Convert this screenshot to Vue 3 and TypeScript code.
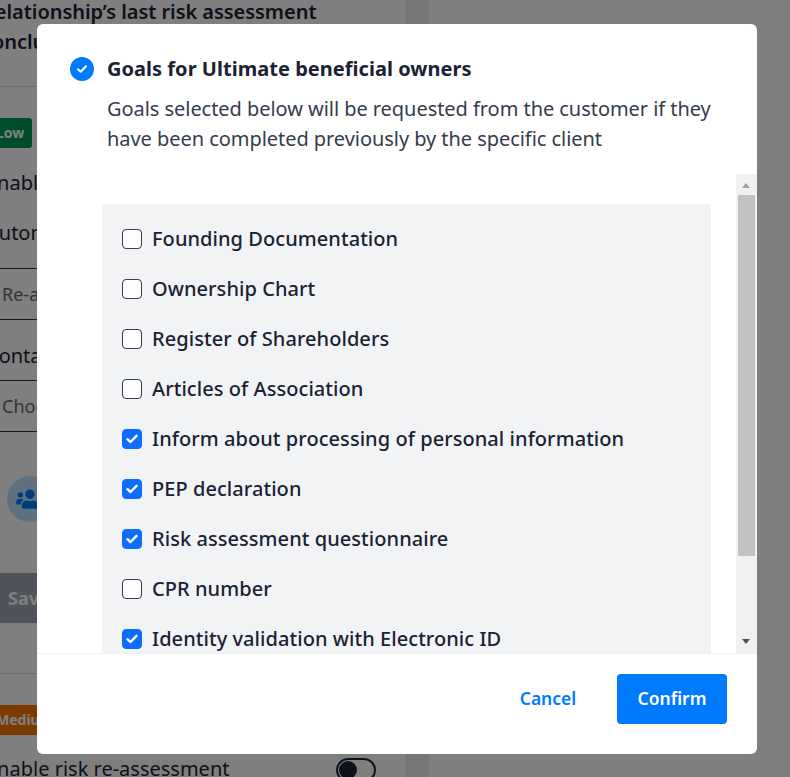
<script setup lang="ts">
interface Goal { label: string; checked: boolean }
const goals: Goal[] = [
  { label: 'Founding Documentation', checked: false },
  { label: 'Ownership Chart', checked: false },
  { label: 'Register of Shareholders', checked: false },
  { label: 'Articles of Association', checked: false },
  { label: 'Inform about processing of personal information', checked: true },
  { label: 'PEP declaration', checked: true },
  { label: 'Risk assessment questionnaire', checked: true },
  { label: 'CPR number', checked: false },
  { label: 'Identity validation with Electronic ID', checked: true },
  { label: 'Proof of address', checked: false },
]
</script>

<template>
  <div class="page">
    <div class="bg">
      <div class="panel">
        <div class="heading">Relationship’s last risk assessment<br />conclusion</div>
        <div class="rule"></div>
        <span class="tag low">Low</span>
        <div class="line l1">Enable</div>
        <div class="line l2">Automatic</div>
        <div class="field f1">Re-assess</div>
        <div class="line l3">Contact</div>
        <div class="field f2">Choose</div>
        <div class="avatar">
          <svg width="28" height="22" viewBox="0 0 640 512"><path fill="#007bff" d="M96 224a64 64 0 1 0 0-128 64 64 0 0 0 0 128zm448 0a64 64 0 1 0 0-128 64 64 0 0 0 0 128zm32 32h-64c-17.600 0-33.500 7.100-45.100 18.600 40.300 22.100 68.900 62 75.100 109.400h66c17.700 0 32-14.300 32-32v-32c0-35.300-28.700-64-64-64zm-256 0a112 112 0 1 0 0-224 112 112 0 0 0 0 224zm76.800 32h-8.300c-20.800 10-43.900 16-68.500 16s-47.600-6-68.500-16h-8.300C179.600 288 128 339.600 128 403.200V432c0 26.500 21.500 48 48 48h288c26.500 0 48-21.500 48-48v-28.800c0-63.600-51.600-115.200-115.200-115.200zm-223.700-13.400C161.500 263.100 145.600 256 128 256H64c-35.300 0-64 28.700-64 64v32c0 17.700 14.300 32 32 32h65.900c6.300-47.400 34.900-87.300 75.200-109.400z"/></svg>
        </div>
        <div class="save">Save</div>
        <div class="rule r2"></div>
        <span class="tag medium">Medium</span>
        <div class="enable">
          <span>Enable risk re-assessment</span>
          <span class="toggle"><i></i></span>
        </div>
      </div>
    </div>
    <div class="backdrop"></div>
    <section class="modal">
      <header class="head">
        <span class="badge">
          <svg width="12" height="10" viewBox="0 0 12 10"><path d="M2 5.200 4.700 7.800 10 2.200" fill="none" stroke="#fff" stroke-width="2" stroke-linecap="round" stroke-linejoin="round"/></svg>
        </span>
        <div class="titles">
          <h2>Goals for Ultimate beneficial owners</h2>
          <p>Goals selected below will be requested from the customer if they have been completed previously by the specific client</p>
        </div>
      </header>
      <div class="scroller">
        <ul class="list">
          <li v-for="g in goals" :key="g.label" class="item">
            <span class="box" :class="{ on: g.checked }">
              <svg v-if="g.checked" width="12" height="10" viewBox="0 0 12 10"><path d="M1.500 5.200 4.500 8 10.500 1.800" fill="none" stroke="#fff" stroke-width="2.400" stroke-linecap="round" stroke-linejoin="round"/></svg>
            </span>
            <span class="label">{{ g.label }}</span>
          </li>
        </ul>
        <div class="scrollbar">
          <span class="arrow up"></span>
          <span class="thumb"></span>
          <span class="arrow down"></span>
        </div>
      </div>
      <footer class="foot">
        <button class="cancel">Cancel</button>
        <button class="confirm">Confirm</button>
      </footer>
    </section>
  </div>
</template>

<style>
html, body { margin: 0; overflow: hidden; }
</style>

<style scoped>
.page {
  position: relative;
  width: 790px;
  height: 777px;
  overflow: hidden;
  font-family: "Noto Sans", sans-serif;
  color: #1a2233;
}
.bg {
  height: 100%;
  display: flex;
  background: #fff;
}
.panel {
  position: relative;
  width: 406px;
  margin-right: 22px;
  border-right: 1px solid #ddd;
  box-shadow: 22px 0 0 #ececec;
  font-size: 20px;
  color: #1a2233;
}
.heading { margin: -3px 0 0 -18px; font-weight: 600; line-height: 30px; letter-spacing: -.05px; white-space: nowrap; }
.rule { height: 1px; background: #dcdfe4; margin-top: 29px; }
.r2 { margin-top: 50px; }
.tag {
  display: block;
  width: max-content;
  margin: 31px 0 0 -12px;
  padding: 0 8px;
  border-radius: 3px;
  color: #fff;
  font-size: 14px;
  font-weight: 700;
  line-height: 30px;
}
.low { background: #009b58; }
.medium { background: #f47500; margin-top: 31px; }
.line { margin-left: -14px; line-height: 26px; white-space: nowrap; }
.l1 { margin-top: 22px; }
.l2 { margin-top: 24px; }
.l3 { margin-top: 23px; }
.field {
  margin-left: -1px;
  height: 50px;
  line-height: 50px;
  border-top: 1px solid #333;
  border-bottom: 1px solid #333;
  padding-left: 3px;
  font-size: 18px;
  color: #666;
}
.f1 { margin-top: 22px; }
.f2 { margin-top: 11px; }
.avatar {
  width: 46px;
  height: 46px;
  border-radius: 50%;
  margin: 44px 0 0 7px;
  background: #bee0ff;
  display: flex;
  align-items: center;
  justify-content: center;
}
.save {
  width: 60px;
  height: 50px;
  margin-top: 51px;
  padding-left: 8px;
  line-height: 50px;
  background: #a0a7b3;
  color: #fff;
  font-size: 18px;
  font-weight: 700;
}
.enable {
  display: flex;
  justify-content: space-between;
  width: 390px;
  margin: 21px 0 0 -14px;
  line-height: 26px;
  white-space: nowrap;
}
.toggle {
  box-sizing: border-box;
  width: 40px;
  height: 24px;
  border: 2px solid #1a2233;
  border-radius: 12px;
  padding: 1px;
  margin-top: 2px;
}
.toggle i { display: block; width: 18px; height: 18px; border-radius: 50%; background: #1a2233; }
.backdrop { position: absolute; inset: 0; background: rgba(0, 0, 0, .5); }
.modal {
  position: absolute;
  left: 37px;
  top: 24px;
  width: 720px;
  height: 730px;
  background: #fff;
  border-radius: 6px;
  display: flex;
  flex-direction: column;
  overflow: hidden;
}
.head { display: flex; gap: 13px; padding: 33px 32px 0 33px; }
.badge {
  width: 24px;
  height: 24px;
  border-radius: 50%;
  background: #007bff;
  display: flex;
  align-items: center;
  justify-content: center;
  flex: none;
}
h2 { margin: 0; font-size: 20px; font-weight: 700; line-height: 24px; letter-spacing: .03px; color: #1a2233; }
p { margin: 13px 0 0; font-size: 20px; line-height: 30px; letter-spacing: -.05px; color: #343c4d; }
.scroller { position: relative; flex: 1; min-height: 0; margin-top: 20px; overflow: hidden; padding-left: 65px; padding-right: 46px; }
.list { list-style: none; margin: 30px 0 0; padding: 10px 20px 0; background: #f2f3f5; }
.item { display: flex; align-items: center; gap: 10px; height: 50px; font-size: 20px; font-weight: 500; letter-spacing: .06px; color: #1a2233; white-space: nowrap; }
.label { padding-bottom: 2px; }
.box {
  box-sizing: border-box;
  width: 20px;
  height: 20px;
  border: 1.500px solid #343c4d;
  border-radius: 4px;
  background: #fff;
  display: flex;
  align-items: center;
  justify-content: center;
  flex: none;
}
.box.on { background: #0d6efd; border-color: #0d6efd; }
.scrollbar { position: absolute; top: 0; right: 0; bottom: 0; width: 21px; background: #f1f1f1; }
.thumb { position: absolute; left: 2px; width: 17px; top: 21px; height: 361px; background: #c1c1c1; }
.arrow { position: absolute; left: 6px; width: 0; height: 0; border-left: 4.500px solid transparent; border-right: 4.500px solid transparent; }
.up { top: 9px; border-bottom: 5px solid #a3a3a3; }
.down { bottom: 9px; border-top: 5px solid #505050; }
.foot {
  flex: none;
  height: 101px;
  box-sizing: border-box;
  border-top: 1px solid #f0f0f0;
  display: flex;
  justify-content: flex-end;
  align-items: flex-start;
  padding: 20px 30px 0;
  gap: 19px;
}
button { font-family: inherit; font-size: 17.500px; font-weight: 600; border: 0; border-radius: 4px; height: 50px; padding: 0 0 2px; cursor: pointer; }
.cancel { background: transparent; color: #007bff; width: 100px; }
.confirm { background: #007bff; color: #fff; width: 110px; }
</style>
